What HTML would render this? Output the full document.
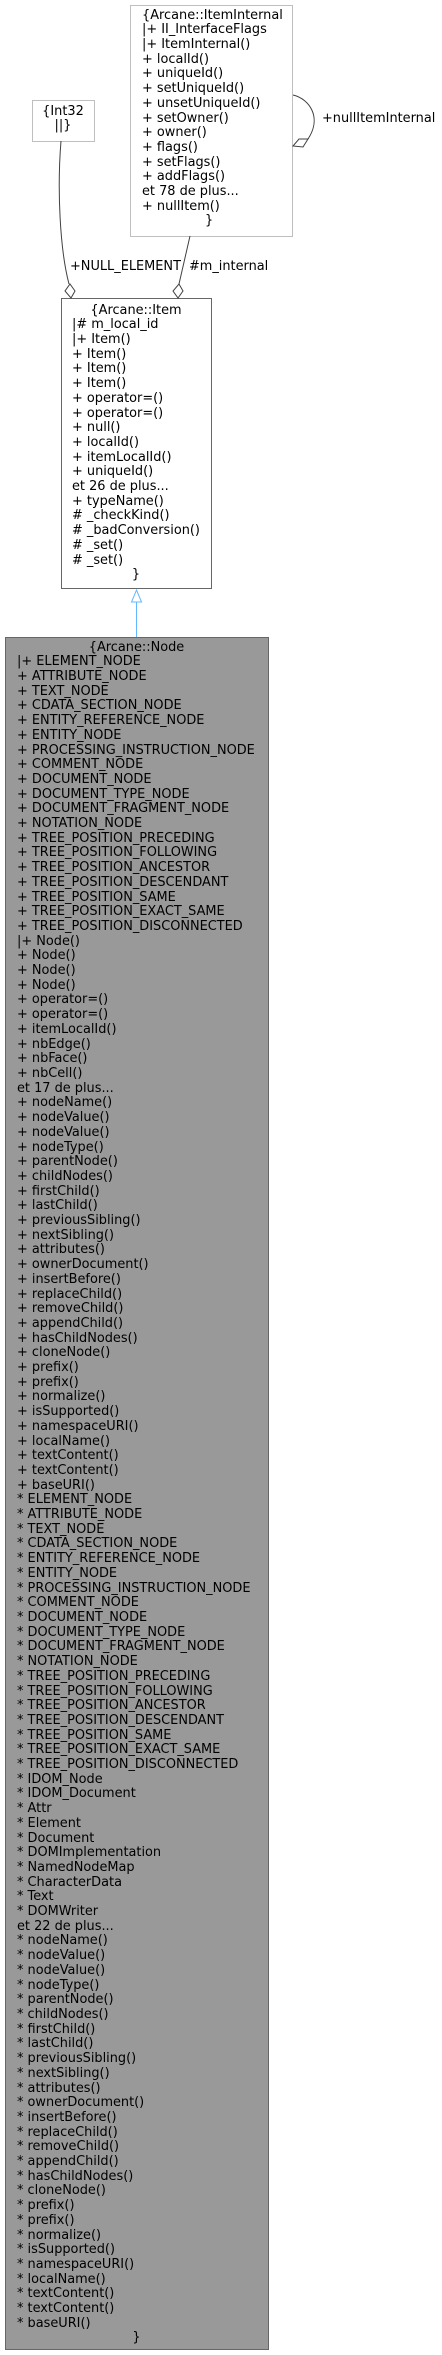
<!DOCTYPE html>
<html><head><meta charset="utf-8"><style>
body{margin:0;background:#fff;width:442px;height:2355px;position:relative;overflow:hidden;font-family:"DejaVu Sans","Liberation Sans",sans-serif;font-size:12.9px;color:#000}
.t{position:absolute;white-space:pre;line-height:14.7px}
.c{text-align:center}
svg{position:absolute;left:0;top:0}
</style></head><body>
<svg width="442" height="2355">
<rect x="130.5" y="5.5" width="162" height="231" fill="#fff" stroke="#bfbfbf"/>
<rect x="32.5" y="100.5" width="62" height="41" fill="#fff" stroke="#bfbfbf"/>
<rect x="61.5" y="298.5" width="150" height="290" fill="#fff" stroke="#666"/>
<rect x="5.5" y="637.5" width="263" height="1712" fill="#999" stroke="#666"/>
<path d="M61,141 C57,190 60,250 69,284" fill="none" stroke="#404040"/>
<path d="M70,284 L75,291 L71,298 L65,291 Z" fill="#fff" stroke="#404040"/>
<path d="M190,236 L179,284" fill="none" stroke="#404040"/>
<path d="M179,284 L183,291 L178,298 L173,291 Z" fill="#fff" stroke="#404040"/>
<path d="M293,95 C310,99 322,118 308,139" fill="none" stroke="#404040"/>
<path d="M308,139 L303,147 L293,146 L299,139 Z" fill="#fff" stroke="#404040"/>
<path d="M136.5,602 L136.5,637" stroke="#63b8ff"/>
<path d="M136.5,590 L141.5,602 L131.5,602 Z" fill="#fff" stroke="#63b8ff"/>
</svg>
<div class="t" style="left:142px;top:8.6px">{Arcane::ItemInternal
|+ II_InterfaceFlags
|+ ItemInternal()
+ localId()
+ uniqueId()
+ setUniqueId()
+ unsetUniqueId()
+ setOwner()
+ owner()
+ flags()
+ setFlags()
+ addFlags()
et 78 de plus...
+ nullItem()</div>
<div class="t" style="left:205px;top:214.4px">}</div>
<div class="t c" style="left:32px;width:62px;top:104.6px">{Int32
||}</div>
<div class="t" style="left:322px;top:111.6px">+nullItemInternal</div>
<div class="t" style="left:70px;top:259.6px">+NULL_ELEMENT</div>
<div class="t" style="left:189px;top:259.6px">#m_internal</div>
<div class="t c" style="left:61px;width:150px;top:303.6px">{Arcane::Item</div>
<div class="t" style="left:72px;top:318.3px">|# m_local_id
|+ Item()
+ Item()
+ Item()
+ Item()
+ operator=()
+ operator=()
+ null()
+ localId()
+ itemLocalId()
+ uniqueId()
et 26 de plus...
+ typeName()
# _checkKind()
# _badConversion()
# _set()
# _set()</div>
<div class="t c" style="left:61px;width:150px;top:568.2px">}</div>
<div class="t c" style="left:5px;width:263px;top:640.6px">{Arcane::Node</div>
<div class="t" style="left:17px;top:655.3px">|+ ELEMENT_NODE
+ ATTRIBUTE_NODE
+ TEXT_NODE
+ CDATA_SECTION_NODE
+ ENTITY_REFERENCE_NODE
+ ENTITY_NODE
+ PROCESSING_INSTRUCTION_NODE
+ COMMENT_NODE
+ DOCUMENT_NODE
+ DOCUMENT_TYPE_NODE
+ DOCUMENT_FRAGMENT_NODE
+ NOTATION_NODE
+ TREE_POSITION_PRECEDING
+ TREE_POSITION_FOLLOWING
+ TREE_POSITION_ANCESTOR
+ TREE_POSITION_DESCENDANT
+ TREE_POSITION_SAME
+ TREE_POSITION_EXACT_SAME
+ TREE_POSITION_DISCONNECTED
|+ Node()
+ Node()
+ Node()
+ Node()
+ operator=()
+ operator=()
+ itemLocalId()
+ nbEdge()
+ nbFace()
+ nbCell()
et 17 de plus...
+ nodeName()
+ nodeValue()
+ nodeValue()
+ nodeType()
+ parentNode()
+ childNodes()
+ firstChild()
+ lastChild()
+ previousSibling()
+ nextSibling()
+ attributes()
+ ownerDocument()
+ insertBefore()
+ replaceChild()
+ removeChild()
+ appendChild()
+ hasChildNodes()
+ cloneNode()
+ prefix()
+ prefix()
+ normalize()
+ isSupported()
+ namespaceURI()
+ localName()
+ textContent()
+ textContent()
+ baseURI()
* ELEMENT_NODE
* ATTRIBUTE_NODE
* TEXT_NODE
* CDATA_SECTION_NODE
* ENTITY_REFERENCE_NODE
* ENTITY_NODE
* PROCESSING_INSTRUCTION_NODE
* COMMENT_NODE
* DOCUMENT_NODE
* DOCUMENT_TYPE_NODE
* DOCUMENT_FRAGMENT_NODE
* NOTATION_NODE
* TREE_POSITION_PRECEDING
* TREE_POSITION_FOLLOWING
* TREE_POSITION_ANCESTOR
* TREE_POSITION_DESCENDANT
* TREE_POSITION_SAME
* TREE_POSITION_EXACT_SAME
* TREE_POSITION_DISCONNECTED
* IDOM_Node
* IDOM_Document
* Attr
* Element
* Document
* DOMImplementation
* NamedNodeMap
* CharacterData
* Text
* DOMWriter
et 22 de plus...
* nodeName()
* nodeValue()
* nodeValue()
* nodeType()
* parentNode()
* childNodes()
* firstChild()
* lastChild()
* previousSibling()
* nextSibling()
* attributes()
* ownerDocument()
* insertBefore()
* replaceChild()
* removeChild()
* appendChild()
* hasChildNodes()
* cloneNode()
* prefix()
* prefix()
* normalize()
* isSupported()
* namespaceURI()
* localName()
* textContent()
* textContent()
* baseURI()</div>
<div class="t c" style="left:5px;width:263px;top:2331.2px">}</div>
</body></html>
